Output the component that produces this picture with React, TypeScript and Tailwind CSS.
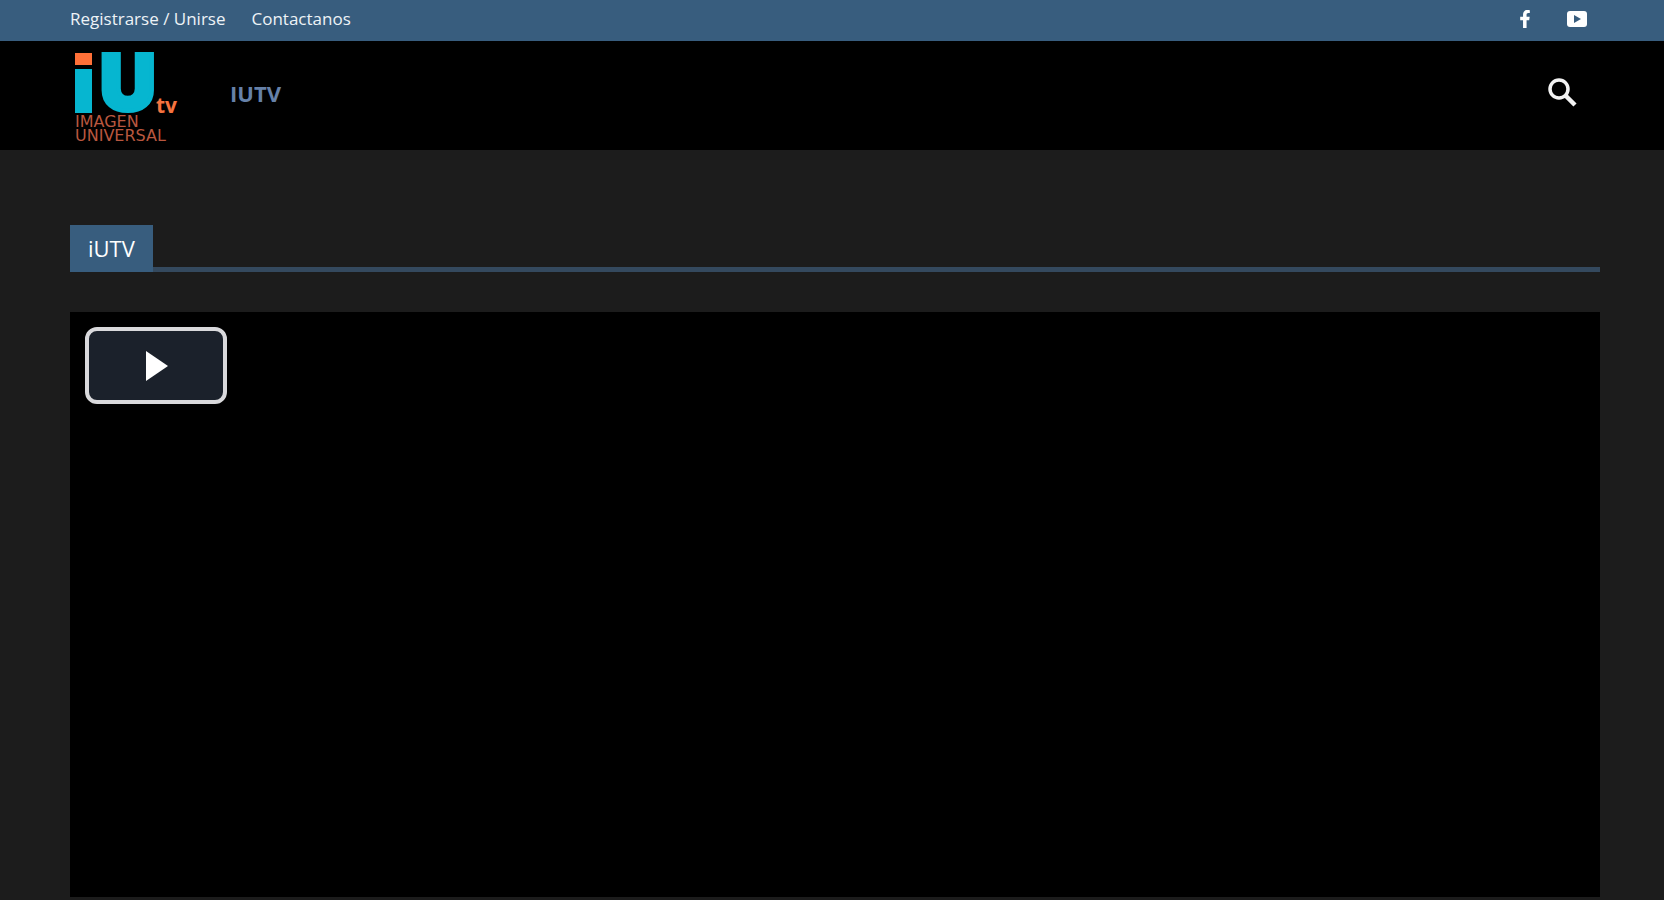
import React from "react";
import { FaFacebookF } from "react-icons/fa";

const topLinks = [
  { label: "Registrarse / Unirse", href: "#registro" },
  { label: "Contactanos", href: "#contacto" },
];

const Logo = () => (
  <div className="pl-[5px]">
    <svg
      width="103"
      height="66"
      viewBox="0 0 103 66"
      className="block overflow-visible"
    >
      <rect x="0" y="4" width="17" height="12" fill="#ff7038" />
      <rect x="0" y="20" width="17" height="44" fill="#06b6d0" />
      <text
        x="25"
        y="61"
        fontSize="77"
        fontWeight="900"
        fill="#06b6d0"
        stroke="#06b6d0"
        strokeWidth="4"
        className="font-['Inter',sans-serif]"
      >
        U
      </text>
      <text x="81" y="64" fontSize="21" fontWeight="700" fill="#f5733f">
        tv
      </text>
    </svg>
    <div className="flex flex-col font-['DejaVu_Sans',sans-serif] text-base leading-[14px] text-[#b9573f]">
      <span>IMAGEN</span>
      <span>UNIVERSAL</span>
    </div>
  </div>
);

const TopBar = () => (
  <div className="flex h-[41px] items-center justify-between bg-[#385d7e] pr-[76px] pl-[70px] text-white">
    <nav className="flex gap-[26px] pb-1 text-[17px] font-medium text-[#eef3f7]">
      {topLinks.map((link) => (
        <a key={link.label} href={link.href}>
          {link.label}
        </a>
      ))}
    </nav>
    <div className="flex items-center gap-8 pb-1">
      <a href="#facebook" aria-label="Facebook">
        <FaFacebookF size={18} />
      </a>
      <a href="#youtube" aria-label="YouTube">
        <svg width="22" height="18" viewBox="0 0 22 18">
          <rect x="1" y="1" width="20" height="16" rx="3" fill="#fff" />
          <path d="M8 5v8l7-4z" fill="#385d7e" />
        </svg>
      </a>
    </div>
  </div>
);

const Header = () => (
  <header className="flex h-[109px] items-center bg-black pr-[87px] pl-[70px]">
    <a href="#inicio">
      <Logo />
    </a>
    <nav className="ml-[52px] flex-1 pb-1">
      <a href="#iutv" className="text-[22px] font-bold text-[#6681a8]">
        IUTV
      </a>
    </nav>
    <button type="button" aria-label="Buscar" className="pb-2">
      <svg
        width="30"
        height="30"
        viewBox="0 0 30 30"
        fill="none"
        stroke="#f2f2f2"
      >
        <circle cx="12" cy="12" r="9" strokeWidth="3.5" />
        <path d="M18 18l10 10" strokeWidth="4.5" />
      </svg>
    </button>
  </header>
);

const App = () => {
  return (
    <div className="flex min-h-screen flex-col bg-[#1c1c1c] font-['Open_Sans',sans-serif]">
      <TopBar />
      <Header />
      <main className="flex flex-1 flex-col pt-[75px] pr-16 pb-[3px] pl-[70px]">
        <div className="flex border-b-[5px] border-[#34495e]">
          <h1 className="-mb-[5px] flex h-[47px] items-center bg-[#385d7e] px-[18px] text-[22px] font-medium text-white">
            iUTV
          </h1>
        </div>
        <section
          aria-label="Reproductor de video"
          className="mt-10 flex-1 bg-black p-[15px]"
        >
          <button
            type="button"
            aria-label="Reproducir"
            className="flex h-[77px] w-[142px] items-center justify-center rounded-xl border-4 border-[#d9d9dc] bg-[#1b212b] text-white"
          >
            <svg width="24" height="30" viewBox="0 0 24 30" fill="currentColor">
              <path d="M2 0v30l22-15z" />
            </svg>
          </button>
        </section>
      </main>
    </div>
  );
};

export default App;
